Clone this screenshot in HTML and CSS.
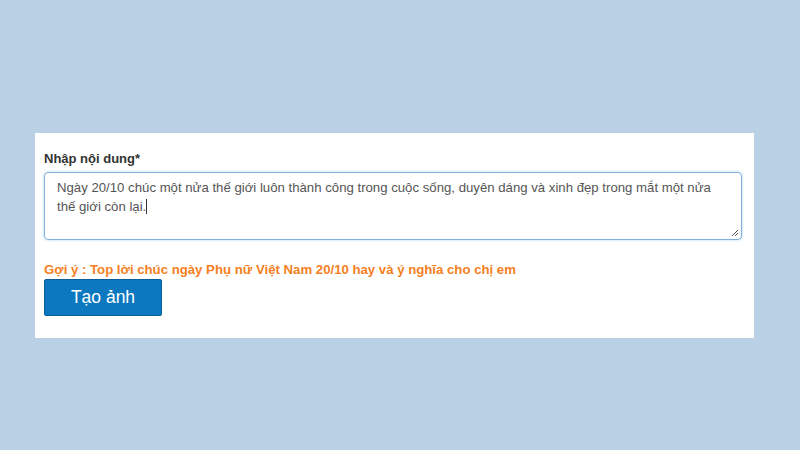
FILE: index.html
```html
<!DOCTYPE html>
<html lang="vi">
<head>
<meta charset="utf-8">
<title>Tạo ảnh</title>
<link rel="stylesheet" href="styles.css">
</head>
<body>
<div class="card">
  <label class="label">Nhập nội dung*</label>
  <div class="textbox" role="textbox">Ngày 20/10 chúc một nửa thế giới luôn thành công trong cuộc sống, duyên dáng và xinh đẹp trong mắt một nửa thế giới còn lại.<span class="caret"></span>
    <svg class="grip" width="8" height="8" viewBox="0 0 8 8"><path d="M7 1L1 7M7 4L4 7" stroke="#555" stroke-width="1" fill="none"/></svg>
  </div>
  <div class="hint">Gợi ý : Top lời chúc ngày Phụ nữ Việt Nam 20/10 hay và ý nghĩa cho chị em</div>
  <button class="btn">Tạo ảnh</button>
</div>
</body>
</html>
```
FILE: styles.css
```css
html, body {
  margin: 0;
  padding: 0;
}
body {
  background: #b9d0e5;
  font-family: "Liberation Sans", Arial, sans-serif;
  padding-top: 133px;
  height: 450px;
  box-sizing: border-box;
}
.card {
  margin-left: 35px;
  width: 719px;
  height: 205px;
  box-sizing: border-box;
  background: #fff;
  padding: 18px 12px 0 9px;
  display: flex;
  flex-direction: column;
  align-items: flex-start;
}
.label {
  font-size: 13px;
  font-weight: bold;
  color: #333;
  line-height: 16px;
  margin-bottom: 5px;
}
.textbox {
  position: relative;
  width: 698px;
  height: 68px;
  box-sizing: border-box;
  border: 1px solid #7fb0dd;
  border-radius: 4px;
  box-shadow: 0 0 3px rgba(102, 175, 233, 0.5);
  padding: 6px 12px;
  font-size: 13.2px;
  line-height: 18.5px;
  color: #555;
}
.caret {
  display: inline-block;
  width: 1px;
  height: 15px;
  background: #333;
  vertical-align: -3px;
}
.grip {
  position: absolute;
  right: 2px;
  bottom: 2px;
}
.hint {
  margin-top: 22px;
  font-size: 13.2px;
  font-weight: bold;
  color: #f57f22;
  line-height: 16px;
}
.btn {
  margin-top: 1px;
  width: 118px;
  height: 37px;
  background: #0b78bf;
  border: 1px solid #0a5f98;
  border-radius: 2px;
  color: #fff;
  font-family: "Liberation Sans", Arial, sans-serif;
  font-size: 17.5px;
  padding: 0;
}
```
